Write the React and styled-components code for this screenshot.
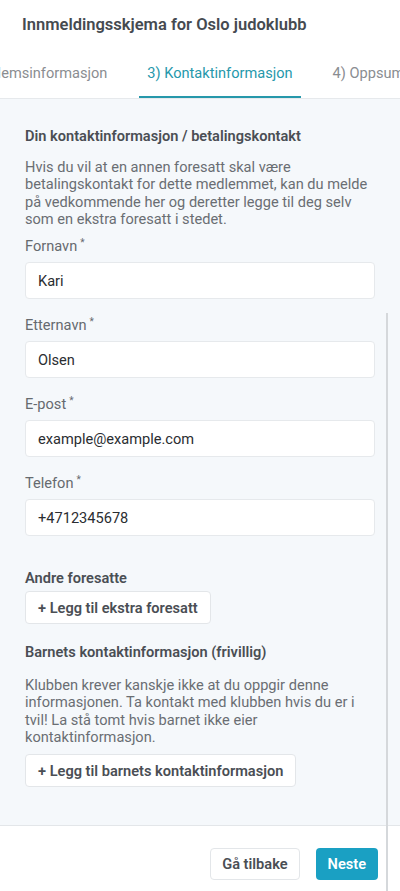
import styled, { createGlobalStyle } from "styled-components";

const GlobalStyle = createGlobalStyle`
  html, body {
    margin: 0;
    padding: 0;
    background: #ffffff;
  }
  * {
    box-sizing: border-box;
  }
  body {
    font-family: Roboto, "Noto Sans", "Liberation Sans", sans-serif;
  }
`;

const Page = styled.div`
  position: relative;
  width: 400px;
  height: 891px;
  display: flex;
  flex-direction: column;
  overflow: hidden;
  background: #ffffff;
`;

const Header = styled.div`
  height: 46px;
  display: flex;
  align-items: center;
  padding-left: 22px;
  padding-top: 2px;
  font-size: 16.5px;
  font-weight: 600;
  color: #454a50;
`;

const Tabs = styled.div`
  height: 53px;
  border-bottom: 1px solid #e6e9ec;
  overflow: hidden;
`;

const TabTrack = styled.div`
  display: flex;
  gap: 24px;
  height: 100%;
  margin-left: -56px;
  white-space: nowrap;
`;

const Tab = styled.div`
  display: flex;
  align-items: center;
  padding: 3px 8px 0;
  font-size: 14.6px;
  color: ${(p) => (p.active ? "#2698ab" : "#8a8d91")};
  border-bottom: 2px solid ${(p) => (p.active ? "#2698ab" : "transparent")};
`;

const Content = styled.div`
  flex: 1;
  background: #f5f8fb;
  padding: 28px 25px 0;
  border-bottom: 1px solid #e3e6e9;
`;

const SectionTitle = styled.div`
  font-size: 14.6px;
  font-weight: 600;
  color: #4a4e54;
  line-height: 18px;
  margin: ${(p) => p.margin || "0"};
`;

const Paragraph = styled.p`
  margin: ${(p) => p.margin || "0"};
  font-size: 14.6px;
  line-height: 17.3px;
  color: #6a6e73;
`;

const Field = styled.div`
  display: flex;
  flex-direction: column;
  margin-bottom: 17px;
`;

const Label = styled.div`
  font-size: 14.6px;
  color: #666a6f;
  line-height: 18px;
  margin-bottom: 7px;

  sup {
    font-size: 10px;
    line-height: 0;
    vertical-align: 5px;
    margin-left: 3px;
  }
`;

const Input = styled.div`
  height: 37px;
  width: 350px;
  background: #ffffff;
  border: 1px solid #e6e9ec;
  border-radius: 4px;
  display: flex;
  align-items: center;
  padding: 0 12px;
  font-size: 14.6px;
  color: #2a2d31;
`;

const OutlineButton = styled.div`
  display: inline-flex;
  align-items: center;
  height: ${(p) => p.h || "33px"};
  padding: 0 ${(p) => p.pad || "12px"};
  background: #ffffff;
  border: 1px solid #e3e6e9;
  border-radius: 4px;
  font-size: 14.6px;
  font-weight: 600;
  color: #4a4e54;
`;

const Footer = styled.div`
  height: 65px;
  display: flex;
  justify-content: flex-end;
  align-items: flex-start;
  gap: 16px;
  padding: 22px 22px 0 0;
`;

const PrimaryButton = styled.div`
  display: inline-flex;
  align-items: center;
  height: 32px;
  padding: 0 12px;
  background: #1aa0c3;
  border-radius: 4px;
  font-size: 14.6px;
  font-weight: 600;
  color: #ffffff;
`;

const Scrollbar = styled.div`
  position: absolute;
  left: 386px;
  top: 313px;
  width: 2px;
  height: 578px;
  background: #d5d8db;
`;

const fields = [
  { label: "Fornavn", value: "Kari" },
  { label: "Etternavn", value: "Olsen" },
  { label: "E-post", value: "example@example.com" },
  { label: "Telefon", value: "+4712345678" },
];

export default function App() {
  return (
    <Page>
      <GlobalStyle />
      <Header>Innmeldingsskjema for Oslo judoklubb</Header>
      <Tabs>
        <TabTrack>
          <Tab>2) Medlemsinformasjon</Tab>
          <Tab active>3) Kontaktinformasjon</Tab>
          <Tab>4) Oppsummering</Tab>
        </TabTrack>
      </Tabs>
      <Content>
        <SectionTitle>Din kontaktinformasjon / betalingskontakt</SectionTitle>
        <Paragraph margin="14px 0 9px">
          Hvis du vil at en annen foresatt skal være betalingskontakt for dette
          medlemmet, kan du melde på vedkommende her og deretter legge til deg
          selv som en ekstra foresatt i stedet.
        </Paragraph>
        {fields.map((f) => (
          <Field key={f.label}>
            <Label>
              {f.label}
              <sup>*</sup>
            </Label>
            <Input>{f.value}</Input>
          </Field>
        ))}
        <SectionTitle margin="33px 0 4px">Andre foresatte</SectionTitle>
        <OutlineButton>+ Legg til ekstra foresatt</OutlineButton>
        <SectionTitle margin="19px 0 16px">
          Barnets kontaktinformasjon (frivillig)
        </SectionTitle>
        <Paragraph margin="0 0 8px">
          Klubben krever kanskje ikke at du oppgir denne informasjonen. Ta
          kontakt med klubben hvis du er i tvil! La stå tomt hvis barnet ikke
          eier kontaktinformasjon.
        </Paragraph>
        <OutlineButton>+ Legg til barnets kontaktinformasjon</OutlineButton>
      </Content>
      <Footer>
        <OutlineButton h="32px" pad="11px">
          Gå tilbake
        </OutlineButton>
        <PrimaryButton>Neste</PrimaryButton>
      </Footer>
      <Scrollbar />
    </Page>
  );
}
